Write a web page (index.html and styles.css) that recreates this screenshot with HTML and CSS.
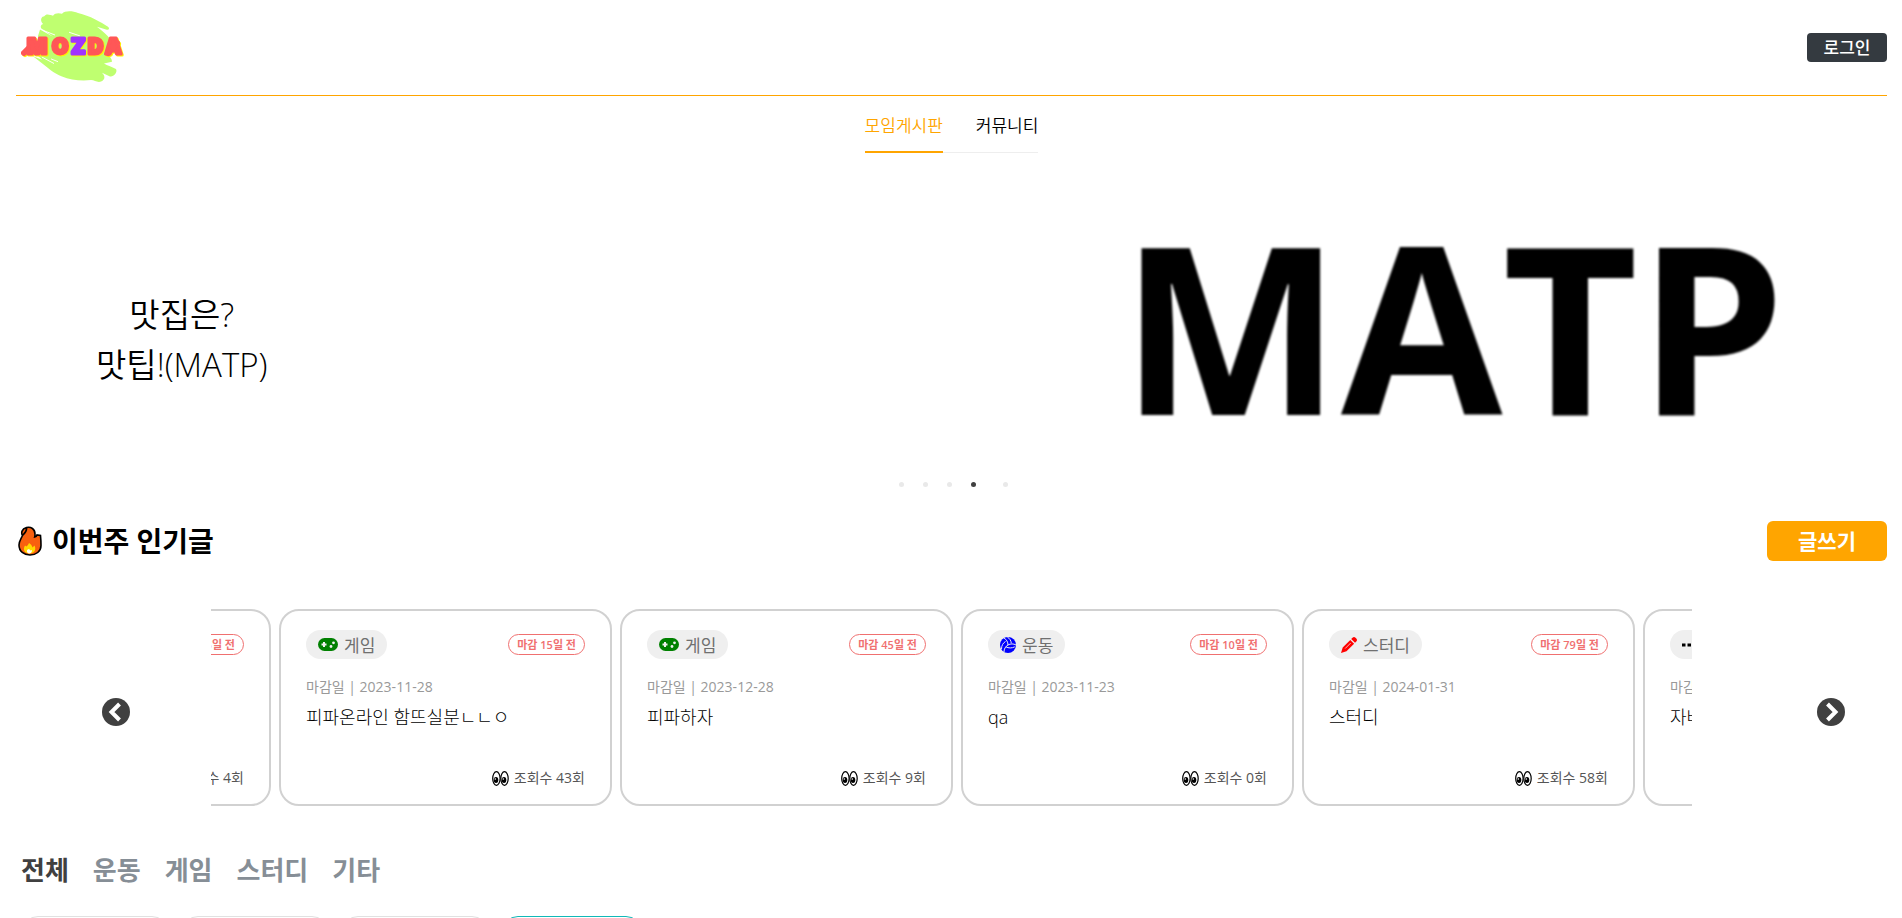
FILE: index.html
```html
<!DOCTYPE html>
<html lang="ko">
<head>
<meta charset="utf-8">
<title>MOZDA</title>
<link rel="stylesheet" href="styles.css">
</head>
<body>
<svg class="sprite" aria-hidden="true">
  <symbol id="i-game" viewBox="0 0 20 14"><rect width="20" height="13" rx="6.500" fill="green"/><path fill="#efefef" d="M5 4h2v1.500h1.500v2H7V9H5V7.500H3.500v-2H5z"/><circle cx="13" cy="8.500" r="1.400" fill="#efefef"/><circle cx="15.500" cy="4.800" r="1.400" fill="#efefef"/></symbol>
  <symbol id="i-ball" viewBox="0 0 16 16"><circle cx="8" cy="8" r="8" fill="blue"/><path fill="none" stroke="#efefef" stroke-width="1" d="M8 8C8 5 6.500 2.500 4 1M8 8c2.600-1.500 5.500-1.400 8 0M8 8c-2.600 1.500-4 4-4 7M5.500 4.500C3 6 1.500 8.500 1.500 12M7.300 0c2.500 1.600 3.700 3.500 4 6.200M5.800 9.800c2.800 1.500 6 1.500 9 0"/></symbol>
  <symbol id="i-pencil" viewBox="0 0 16 16"><path fill="red" d="M11.500.7a2.200 2.200 0 0 1 3 0l.8.8a2.200 2.200 0 0 1 0 3L14 5.800 10.200 2zM9.300 2.900l3.800 3.800-7.600 7.600L0 16l1.700-5.500z"/><path stroke="#efefef" stroke-width=".8" d="M4.200 11.500l5.500-5.500"/></symbol>
  <symbol id="i-dots" viewBox="0 0 16 16"><path d="M0 6.500h3.500v3H0zM5.500 6.500H9v3H5.500zM11 6.500h3.500v3H11z"/></symbol>
  <symbol id="i-eyes" viewBox="0 0 17 15"><g fill="#fff" stroke="#000" stroke-width="1.200"><ellipse cx="4.400" cy="7.500" rx="3.700" ry="6.800"/><ellipse cx="12.500" cy="7.500" rx="3.700" ry="6.800"/></g><ellipse cx="4" cy="9" rx="2.300" ry="3"/><ellipse cx="12" cy="9" rx="2.300" ry="3"/><circle cx="3.300" cy="8" r=".8" fill="#fff"/><circle cx="11.300" cy="8" r=".8" fill="#fff"/></symbol>
</svg>

<header class="header">
  <a class="logo" href="#" aria-label="MOZDA">
    <svg viewBox="0 0 108 78" width="108" height="78">
      <g transform="translate(0 3) scale(1 .92)">
        <path fill="#bfff70" d="M28 5c2-4 6-2 9-1 2-3 6-3 9-2 3-4 11-3 16-1 12 3 23 10 30 15 2 2 1 4-2 3l-9-3c5 4 10 9 13 13l-1 18c1 2 3 4 3 7l-8 2c3 2 9 4 12 6 2 4-3 9-6 8l-8-4c4 4 3 9-3 10-3 0-5-2-8-2-10 1-21 0-29-4-8-3-14-9-21-15l-8-7 9 4-11-12 9 2-2-16 2-7 13 8-10-8c-3-1-3-5 0-6-2-2-3-6 0-8z"/>
        <path fill="none" stroke="#fff" stroke-width="1" d="M27 20l12 5M26 49l12 7M35 51l7 3M53 22l11 4"/>
      </g>
      <g class="logo-text">
        <path fill="none" class="logo-leg" d="M8 44L17 35M92 44L101 34"/>
        <text y="45"><tspan x="11">M</tspan><tspan x="36">O</tspan><tspan class="logo-z" x="55">Z</tspan><tspan x="72">D</tspan><tspan x="89">A</tspan></text>
      </g>
    </svg>
  </a>
  <button class="login" type="button">로그인</button>
</header>

<nav class="tabs">
  <a class="tab tab-on" href="#">모임게시판</a>
  <a class="tab" href="#">커뮤니티</a>
</nav>

<section class="banner">
  <div class="slide">
    <p class="slide-copy">맛집은?<br>맛팁!(MATP)</p>
    <div class="slide-art">MATP</div>
  </div>
  <div class="dots">
    <button class="dot" type="button" aria-label="1"></button>
    <button class="dot" type="button" aria-label="2"></button>
    <button class="dot" type="button" aria-label="3"></button>
    <button class="dot dot-on" type="button" aria-label="4"></button>
    <button class="dot" type="button" aria-label="5"></button>
  </div>
</section>

<section class="popular">
  <div class="popular-head">
    <h2 class="popular-title">
      <svg viewBox="0 0 24 30" width="24" height="30"><path fill="#f8600f" stroke="#000" stroke-width="1.600" d="M8.500 1.500C13 .5 17 3 17 8c0 1 0 2-.3 3 1.300-.2 2-1 2.300-2l3.500.5c.5 5 .5 6 .5 10 0 6-5 9.500-11 9.500S1 25.500 1 19c0-4 2-6 3.500-9.500C3 7 3.500 3 8.500 1.500zM8.500 1.500C9 4 8 6 5 9"/><path fill="#ffd800" d="M11 17c2 1 3 3 3.500 4.500l2-2c2 4 0 8-5 8s-7-4-4.500-8l1.500 1c1-1 2-2 2.500-3.500z"/><path fill="#fff" d="M11 23l1.500 1.500L14 24c0 2-1 3.500-2.700 3.500S8.500 26 9 24z"/></svg>
      이번주 인기글</h2>
    <button class="write" type="button">글쓰기</button>
  </div>

  <div class="carousel">
    <button class="arrow" type="button" aria-label="이전"><svg viewBox="0 0 28 28" width="28" height="28"><circle cx="14" cy="14" r="14" fill="#404040"/><path fill="none" stroke="#fff" stroke-width="4" d="M17.500 6L9.500 14l8 8"/></svg></button>
    <div class="viewport">
      <article class="card">
        <div class="card-top"><span class="tag"><svg width="20" height="14"><use href="#i-game"/></svg>게임</span><span class="due">마감 15일 전</span></div>
        <p class="date">마감일 | 2023-11-20</p><h3 class="name">게임</h3>
        <p class="views"><svg width="17" height="15"><use href="#i-eyes"/></svg>조회수 4회</p>
      </article>
      <article class="card">
        <div class="card-top"><span class="tag"><svg width="20" height="14"><use href="#i-game"/></svg>게임</span><span class="due">마감 15일 전</span></div>
        <p class="date">마감일 | 2023-11-28</p><h3 class="name">피파온라인 함뜨실분ㄴㄴㅇ</h3>
        <p class="views"><svg width="17" height="15"><use href="#i-eyes"/></svg>조회수 43회</p>
      </article>
      <article class="card">
        <div class="card-top"><span class="tag"><svg width="20" height="14"><use href="#i-game"/></svg>게임</span><span class="due">마감 45일 전</span></div>
        <p class="date">마감일 | 2023-12-28</p><h3 class="name">피파하자</h3>
        <p class="views"><svg width="17" height="15"><use href="#i-eyes"/></svg>조회수 9회</p>
      </article>
      <article class="card">
        <div class="card-top"><span class="tag"><svg width="16" height="16"><use href="#i-ball"/></svg>운동</span><span class="due">마감 10일 전</span></div>
        <p class="date">마감일 | 2023-11-23</p><h3 class="name">qa</h3>
        <p class="views"><svg width="17" height="15"><use href="#i-eyes"/></svg>조회수 0회</p>
      </article>
      <article class="card">
        <div class="card-top"><span class="tag"><svg width="16" height="16"><use href="#i-pencil"/></svg>스터디</span><span class="due">마감 79일 전</span></div>
        <p class="date">마감일 | 2024-01-31</p><h3 class="name">스터디</h3>
        <p class="views"><svg width="17" height="15"><use href="#i-eyes"/></svg>조회수 58회</p>
      </article>
      <article class="card">
        <div class="card-top"><span class="tag"><svg width="16" height="16"><use href="#i-dots"/></svg>기타</span></div>
        <p class="date">마감일</p><h3 class="name">자바</h3>
      </article>
    </div>
    <button class="arrow" type="button" aria-label="다음"><svg viewBox="0 0 28 28" width="28" height="28"><circle cx="14" cy="14" r="14" fill="#404040"/><path fill="none" stroke="#fff" stroke-width="4" d="M10.500 6l8 8-8 8"/></svg></button>
  </div>
</section>

<nav class="cats">
  <a class="cat cat-on" href="#">전체</a>
  <a class="cat" href="#">운동</a>
  <a class="cat" href="#">게임</a>
  <a class="cat" href="#">스터디</a>
  <a class="cat" href="#">기타</a>
</nav>
<div class="filters">
  <button class="filter" type="button"></button>
  <button class="filter" type="button"></button>
  <button class="filter" type="button"></button>
  <button class="filter filter-on" type="button"></button>
</div>
</body>
</html>
```

FILE: styles.css
```css
* { box-sizing: border-box; }
html { scrollbar-width: none; }
body {
  margin: 0;
  padding: 0 15px 0 16px;
  background: #fff;
  color: #000;
  font-family: "Open Sans", "Noto Sans CJK KR", sans-serif;
  font-size: 17px;
  font-weight: 400;
}
a { color: inherit; text-decoration: none; }
button { font: inherit; border: 0; padding: 0; cursor: pointer; }
h2, h3, p { margin: 0; }
svg { flex: none; }
.sprite { display: none; }

.header {
  display: flex;
  align-items: center;
  justify-content: space-between;
  height: 96px;
  border-bottom: 1px solid orange;
}
.logo { display: block; height: 78px; }
.logo-text {
  font-family: Inter, sans-serif;
  font-size: 21px;
  font-weight: 900;
  fill: #ff5757;
  stroke: #ff5757;
  stroke-width: 3px;
  stroke-linejoin: round;
  filter: drop-shadow(1px 1px 0 #fff200);
}
.logo-leg { stroke-width: 6px; stroke-linecap: round; }
.logo-z { fill: #a033ff; stroke: #a033ff; }
.login {
  width: 80px;
  height: 29px;
  border-radius: 4px;
  background: #343a40;
  color: #fff;
  font-weight: 500;
  line-height: 28px;
}

.tabs { display: flex; justify-content: center; height: 57px; }
.tab {
  padding: 16px 0 0 33px;
  border-bottom: 1px solid #eee;
  font-weight: 350;
  line-height: 28px;
}
.tab-on { padding-left: 0; border-bottom: 2px solid orange; color: orange; }

.banner { padding-top: 22px; }
.slide {
  display: flex;
  justify-content: space-between;
  align-items: center;
  height: 300px;
  padding: 0 102px 0 80px;
}
.slide-copy {
  padding-top: 30px;
  font-size: 33px;
  font-weight: 350;
  line-height: 50px;
  text-align: center;
}
.slide-art {
  font-size: 234px;
  font-weight: 700;
  line-height: 302px;
  filter: blur(1px);
}
.dots { display: flex; justify-content: center; gap: 4px; padding-left: 4px; }
.dot { display: grid; place-items: center; width: 20px; height: 19px; background: none; }
.dot::before { content: ""; width: 5px; height: 5px; border-radius: 50%; background: #e9e9e9; }
.dot-on { margin-right: 8px; }
.dot-on::before { background: #404040; }

.popular-head {
  display: flex;
  align-items: center;
  justify-content: space-between;
  padding-top: 27px;
}
.popular-title {
  display: flex;
  align-items: center;
  gap: 10px;
  padding-left: 2px;
  font-size: 28px;
  font-weight: 700;
  line-height: 40px;
}
.write {
  width: 120px;
  height: 40px;
  border-radius: 6px;
  background: orange;
  color: #fff;
  font-size: 21px;
  font-weight: 700;
  line-height: 38px;
}

.carousel {
  display: flex;
  align-items: center;
  padding: 48px 42px 0 86px;
}
.arrow { flex: none; width: 28px; height: 28px; margin-top: 8px; background: none; }
.viewport {
  flex: 1;
  display: flex;
  justify-content: center;
  gap: 8px;
  margin: 0 125px 0 81px;
  padding-left: 11px;
  overflow: hidden;
}
.card {
  flex: none;
  display: flex;
  flex-direction: column;
  width: 333px;
  height: 197px;
  padding: 19px 25px 16px;
  border: 2px solid #d1d1d1;
  border-radius: 20px;
}
.card-top { display: flex; align-items: center; justify-content: space-between; }
.tag {
  display: flex;
  align-items: center;
  gap: 6px;
  height: 29px;
  padding: 0 12px;
  border-radius: 15px;
  background: #efefef;
  color: #707070;
}
.due {
  padding: 0 8px;
  border: 1px solid #f07070;
  border-radius: 11px;
  color: #f07070;
  font-size: 11px;
  font-weight: 600;
  line-height: 19px;
}
.date { margin-top: 18px; color: #999; font-size: 14px; line-height: 20px; }
.name { margin-top: 6px; font-size: 18px; font-weight: 300; line-height: 28px; }
.views {
  display: flex;
  align-items: center;
  justify-content: flex-end;
  gap: 5px;
  margin-top: auto;
  color: #555;
  font-size: 14px;
  line-height: 20px;
}

.cats {
  display: flex;
  gap: 24px;
  padding: 44px 5px 0;
  color: #868e96;
  font-size: 26px;
  font-weight: 700;
  line-height: 40px;
}
.cat-on { color: #404040; }
.filters { display: flex; gap: 14px; padding: 26px 6px 24px; }
.filter {
  width: 146px;
  height: 48px;
  border: 1px solid #e1e1e1;
  border-radius: 16px;
  background: #fff;
}
.filter-on { width: 140px; border-color: #12b8b8; }
```
